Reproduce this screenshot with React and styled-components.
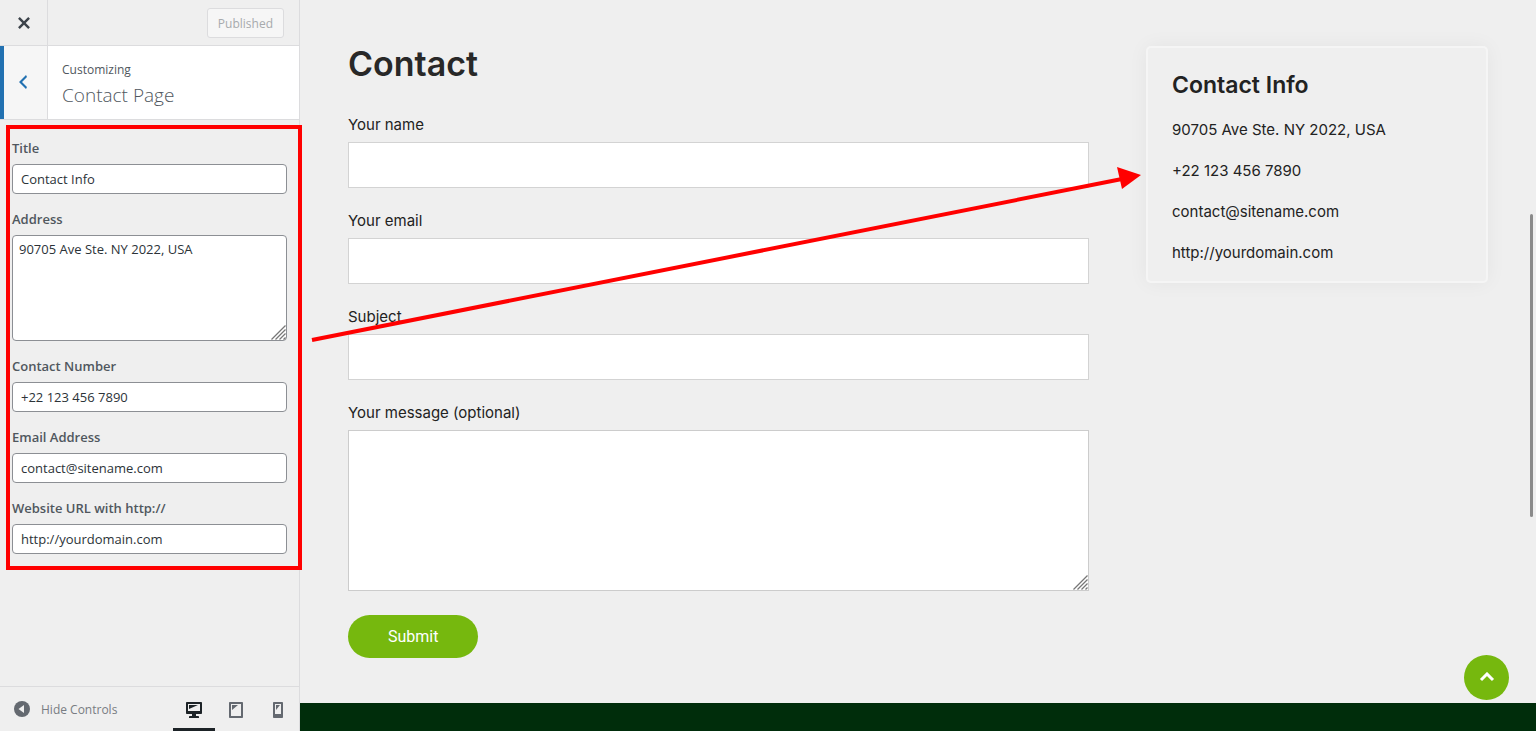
import React from 'react'
import styled, { createGlobalStyle } from 'styled-components'

const GlobalStyle = createGlobalStyle`
  * {
    box-sizing: border-box;
  }

  body {
    margin: 0;
    background: #efefef;
  }
`

const Page = styled.div`
  display: grid;
  grid-template-columns: 300px 1fr;
  min-height: 100vh;
`

/* customizer sidebar */

const Sidebar = styled.aside`
  display: flex;
  flex-direction: column;
  border-right: 1px solid #dcdcde;
  font-family: 'Open Sans', 'Noto Sans', sans-serif;
  font-size: 13px;
  color: #50575e;
`

const TopBar = styled.div`
  display: flex;
  align-items: center;
  justify-content: space-between;
  height: 46px;
  padding-right: 15px;
  border-bottom: 1px solid #dcdcde;
`

const CloseButton = styled.button`
  display: flex;
  align-items: center;
  justify-content: center;
  width: 48px;
  height: 45px;
  padding: 0;
  border: 0;
  border-right: 1px solid #dcdcde;
  background: transparent;
  color: #3c434a;
  cursor: pointer;
`

const PublishButton = styled.button`
  height: 30px;
  padding: 2px 10px 0;
  border: 1px solid #dcdcde;
  border-radius: 3px;
  background: #f6f6f6;
  color: #a7aaad;
  font-family: inherit;
  font-size: 12px;
`

const SectionHeader = styled.header`
  display: flex;
  height: 74px;
  background: #ffffff;
  border-bottom: 1px solid #dcdcde;
`

const BackButton = styled.button`
  display: flex;
  align-items: center;
  justify-content: center;
  width: 48px;
  padding: 0 6px 2px 0;
  border: 0;
  border-left: 4px solid #2271b1;
  border-right: 1px solid #dcdcde;
  background: #f6f6f6;
  color: #2271b1;
  cursor: pointer;
`

const SectionTitle = styled.div`
  padding: 14px;
`

const Kicker = styled.p`
  margin: 0;
  font-size: 12px;
  line-height: 20px;
`

const SectionName = styled.h3`
  margin: 0;
  font-size: 19px;
  font-weight: 300;
  line-height: 30px;
`

const Controls = styled.form`
  position: relative;
  display: flex;
  flex-direction: column;
  gap: 15px;
  padding: 18px 12px 16px;
`

const HighlightFrame = styled.div`
  position: absolute;
  top: 5px;
  right: -3px;
  bottom: 0;
  left: 6px;
  border: 4px solid #ff0000;
  pointer-events: none;
`

const Control = styled.div`
  display: flex;
  flex-direction: column;
  gap: 6px;
`

const ControlLabel = styled.label`
  font-size: 13px;
  font-weight: 600;
  line-height: 20px;
`

const ControlInput = styled.input`
  width: 100%;
  height: 30px;
  padding: 0 8px;
  border: 1px solid #8c8f94;
  border-radius: 4px;
  background: #ffffff;
  color: #2c3338;
  font-family: inherit;
  font-size: 13px;
`

const ControlTextarea = styled.textarea`
  display: block;
  width: 100%;
  height: 106px;
  padding: 3px 6px;
  border: 1px solid #8c8f94;
  border-radius: 4px;
  background: #ffffff;
  color: #2c3338;
  font-family: inherit;
  font-size: 13px;
  line-height: 20px;
  resize: none;
`

const TextareaWrap = styled.div`
  position: relative;
`

const Grip = styled.svg`
  position: absolute;
  right: 1px;
  bottom: 1px;
  pointer-events: none;
`

const SidebarFooter = styled.footer`
  display: flex;
  align-items: stretch;
  justify-content: space-between;
  height: 45px;
  margin-top: auto;
  border-top: 1px solid #dcdcde;
`

const CollapseButton = styled.button`
  display: flex;
  align-items: center;
  gap: 11px;
  padding: 0 0 0 14px;
  border: 0;
  background: transparent;
  color: #787c82;
  font-family: inherit;
  font-size: 12px;
  line-height: 20px;
  cursor: pointer;

  span {
    padding-top: 2px;
  }
`

const Devices = styled.div`
  display: flex;
`

const DeviceButton = styled.button`
  display: flex;
  align-items: center;
  justify-content: center;
  width: 42px;
  padding: 4px 0 0;
  border: 0;
  border-bottom: 3px solid ${(props) => (props.$active ? '#1d2327' : 'transparent')};
  background: transparent;
  color: ${(props) => (props.$active ? '#1d2327' : '#646970')};
  cursor: pointer;
`

/* site preview */

const Preview = styled.div`
  position: relative;
  display: flex;
  flex-direction: column;
  font-family: Inter, sans-serif;
  color: #222222;
`

const Content = styled.main`
  display: grid;
  grid-template-columns: 13fr 6fr;
  align-items: start;
  gap: 57px;
  padding: 46px 48px 45px;
`

const PageTitle = styled.h1`
  margin: 0 0 34px;
  font-size: 34px;
  font-weight: 600;
  line-height: 36px;
  color: #282828;
`

const ContactForm = styled.form`
  display: flex;
  flex-direction: column;
  align-items: flex-start;
  gap: 24px;
`

const Field = styled.div`
  display: flex;
  flex-direction: column;
  gap: 8px;
  width: 100%;
`

const FieldLabel = styled.label`
  font-size: 15px;
  line-height: 18px;
`

const FieldInput = styled.input`
  width: 100%;
  height: 46px;
  padding: 0 12px;
  border: 1px solid #d3d3d3;
  background: #ffffff;
  font: inherit;
`

const FieldTextarea = styled.textarea`
  display: block;
  width: 100%;
  height: 161px;
  padding: 12px;
  border: 1px solid #cccccc;
  background: #ffffff;
  font: inherit;
  resize: none;
`

const SubmitButton = styled.button`
  height: 43px;
  padding: 0 40px;
  border: 0;
  border-radius: 22px;
  background: #76b80e;
  color: #ffffff;
  font-family: Roboto, sans-serif;
  font-size: 16px;
  cursor: pointer;
`

const InfoCard = styled.section`
  padding: 24px 24px 18px;
  border: 2px solid #f5f5f5;
  border-radius: 5px;
  box-shadow: 0 0 20px rgba(0, 0, 0, 0.05);
`

const InfoTitle = styled.h2`
  margin: 0 0 22px;
  font-size: 23px;
  font-weight: 600;
  line-height: 26px;
`

const InfoList = styled.div`
  display: flex;
  flex-direction: column;
  gap: 21px;
`

const InfoLine = styled.p`
  margin: 0;
  font-size: 15px;
  line-height: 20px;
`

const SiteFooter = styled.footer`
  flex: 1;
  min-height: 28px;
  background: #002d0b;
`

const ScrollTop = styled.button`
  position: fixed;
  right: 27px;
  bottom: 31px;
  display: flex;
  align-items: center;
  justify-content: center;
  width: 45px;
  height: 45px;
  padding: 0 0 2px;
  border: 0;
  border-radius: 50%;
  background: #76b80e;
  color: #ffffff;
  cursor: pointer;
`

const ScrollThumb = styled.div`
  position: fixed;
  top: 214px;
  right: 3px;
  width: 3px;
  height: 303px;
  border-radius: 2px;
  background: #8b8b8b;
`

const Arrow = styled.svg`
  position: absolute;
  top: 160px;
  left: 10px;
  pointer-events: none;
`

const controls = [
  { id: 'title', label: 'Title', value: 'Contact Info' },
  { id: 'address', label: 'Address', value: '90705 Ave Ste. NY 2022, USA', multiline: true },
  { id: 'number', label: 'Contact Number', value: '+22 123 456 7890' },
  { id: 'email', label: 'Email Address', value: 'contact@sitename.com' },
  { id: 'url', label: 'Website URL with http://', value: 'http://yourdomain.com' },
]

const fields = [
  { id: 'your-name', label: 'Your name', type: 'text' },
  { id: 'your-email', label: 'Your email', type: 'email' },
  { id: 'your-subject', label: 'Subject', type: 'text' },
]

const devices = [
  {
    name: 'desktop',
    path: 'M3 2h14c.55 0 1 .45 1 1v10c0 .55-.45 1-1 1h-5v2h2c.55 0 1 .45 1 1v1H5v-1c0-.55.45-1 1-1h2v-2H3c-.55 0-1-.45-1-1V3c0-.55.45-1 1-1zm13 9V4H4v7h12zM5 5h9L5 9V5z',
  },
  {
    name: 'tablet',
    path: 'M4 2h12c.55 0 1 .45 1 1v14c0 .55-.45 1-1 1H4c-.55 0-1-.45-1-1V3c0-.55.45-1 1-1zm11 14V4H5v12h10zM6 5h6l-6 5V5z',
  },
  {
    name: 'mobile',
    path: 'M6 2h8c.55 0 1 .45 1 1v14c0 .55-.45 1-1 1H6c-.55 0-1-.45-1-1V3c0-.55.45-1 1-1zm7 12V4H7v10h6zM8 5h4l-4 5V5z',
  },
]

const Icon = ({ size = 20, path }) => (
  <svg width={size} height={size} viewBox="0 0 20 20" fill="currentColor" aria-hidden="true">
    <path fillRule="evenodd" d={path} />
  </svg>
)

const ResizeGrip = () => (
  <Grip width="15" height="15" viewBox="0 0 15 15" stroke="#777777" strokeWidth="1.3" aria-hidden="true">
    <path d="M0.5 14.5L14.5 0.5M4.5 14.5L14.5 4.5M8.5 14.5L14.5 8.5M12.5 14.5L14.5 12.5" />
  </Grip>
)

class CustomizerSidebar extends React.Component {
  state = {
    device: 'desktop',
  }

  render() {
    const { values, onChange } = this.props

    return (
      <Sidebar>
        <TopBar>
          <CloseButton type="button" aria-label="Close">
            <Icon
              size={24}
              path="M14.95 6.46L11.41 10l3.54 3.54-1.41 1.41L10 11.42l-3.53 3.53-1.42-1.42L8.58 10 5.05 6.47l1.42-1.42L10 8.58l3.54-3.53z"
            />
          </CloseButton>
          <PublishButton type="button" disabled>Published</PublishButton>
        </TopBar>

        <SectionHeader>
          <BackButton type="button" aria-label="Back">
            <Icon path="M14 5l-5 5 5 5-1 2-7-7 7-7z" />
          </BackButton>
          <SectionTitle>
            <Kicker>Customizing</Kicker>
            <SectionName>Contact Page</SectionName>
          </SectionTitle>
        </SectionHeader>

        <Controls>
          {controls.map((control) => (
            <Control key={control.id}>
              <ControlLabel htmlFor={control.id}>{control.label}</ControlLabel>
              {control.multiline ? (
                <TextareaWrap>
                  <ControlTextarea
                    id={control.id}
                    value={values[control.id]}
                    spellCheck={false}
                    onChange={(event) => onChange(control.id, event.target.value)}
                  />
                  <ResizeGrip />
                </TextareaWrap>
              ) : (
                <ControlInput
                  id={control.id}
                  type="text"
                  value={values[control.id]}
                  onChange={(event) => onChange(control.id, event.target.value)}
                />
              )}
            </Control>
          ))}
          <HighlightFrame />
        </Controls>

        <SidebarFooter>
          <CollapseButton type="button">
            <svg width="16" height="16" viewBox="0 0 16 16" aria-hidden="true">
              <circle cx="8" cy="8" r="8" fill="#646970" />
              <path d="M10 4v8L4.500 8z" fill="#efefef" />
            </svg>
            <span>Hide Controls</span>
          </CollapseButton>
          <Devices>
            {devices.map((device) => (
              <DeviceButton
                key={device.name}
                type="button"
                aria-label={device.name}
                $active={this.state.device === device.name}
                onClick={() => this.setState({ device: device.name })}
              >
                <Icon path={device.path} />
              </DeviceButton>
            ))}
          </Devices>
        </SidebarFooter>
      </Sidebar>
    )
  }
}

const SitePreview = ({ values }) => (
  <Preview>
    <Content>
      <div>
        <PageTitle>Contact</PageTitle>
        <ContactForm onSubmit={(event) => event.preventDefault()}>
          {fields.map((field) => (
            <Field key={field.id}>
              <FieldLabel htmlFor={field.id}>{field.label}</FieldLabel>
              <FieldInput id={field.id} type={field.type} />
            </Field>
          ))}
          <Field>
            <FieldLabel htmlFor="your-message">Your message (optional)</FieldLabel>
            <TextareaWrap>
              <FieldTextarea id="your-message" />
              <ResizeGrip />
            </TextareaWrap>
          </Field>
          <SubmitButton type="submit">Submit</SubmitButton>
        </ContactForm>
      </div>

      <InfoCard>
        <InfoTitle>{values.title}</InfoTitle>
        <InfoList>
          <InfoLine>{values.address}</InfoLine>
          <InfoLine>{values.number}</InfoLine>
          <InfoLine>{values.email}</InfoLine>
          <InfoLine>{values.url}</InfoLine>
        </InfoList>
      </InfoCard>
    </Content>
    <SiteFooter />

    <Arrow width="840" height="190" viewBox="0 0 840 190" aria-hidden="true">
      <path d="M2 180L812 19" stroke="#ff0000" strokeWidth="4" />
      <path d="M807 7L831 15L812 29z" fill="#ff0000" />
    </Arrow>
    <ScrollThumb />
    <ScrollTop type="button" aria-label="Back to top">
      <svg width="16" height="10" viewBox="0 0 16 10" fill="none" stroke="currentColor" strokeWidth="3" aria-hidden="true">
        <path d="M2 8L8 2L14 8" />
      </svg>
    </ScrollTop>
  </Preview>
)

export default class App extends React.Component {
  state = Object.fromEntries(controls.map((control) => [control.id, control.value]))

  onChangeControl = (id, value) => {
    this.setState({ [id]: value })
  }

  render() {
    return (
      <Page>
        <GlobalStyle />
        <CustomizerSidebar values={this.state} onChange={this.onChangeControl} />
        <SitePreview values={this.state} />
      </Page>
    )
  }
}
